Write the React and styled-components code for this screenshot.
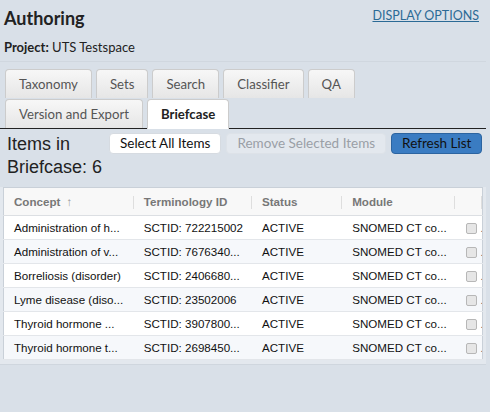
import React from 'react';
import styled, { createGlobalStyle } from 'styled-components';

const GlobalStyle = createGlobalStyle`
  html, body {
    margin: 0;
    padding: 0;
    background: #d9e0e8;
  }
  body {
    font-family: Lato, "Open Sans", sans-serif;
    color: #222;
  }
`;

const tabs = [
  'Taxonomy',
  'Sets',
  'Search',
  'Classifier',
  'QA',
  'Version and Export',
  'Briefcase',
];

const rows = [
  { concept: 'Administration of h...', id: 'SCTID: 722215002', status: 'ACTIVE', module: 'SNOMED CT co...' },
  { concept: 'Administration of v...', id: 'SCTID: 7676340...', status: 'ACTIVE', module: 'SNOMED CT co...' },
  { concept: 'Borreliosis (disorder)', id: 'SCTID: 2406680...', status: 'ACTIVE', module: 'SNOMED CT co...' },
  { concept: 'Lyme disease (diso...', id: 'SCTID: 23502006', status: 'ACTIVE', module: 'SNOMED CT co...' },
  { concept: 'Thyroid hormone ...', id: 'SCTID: 3907800...', status: 'ACTIVE', module: 'SNOMED CT co...' },
  { concept: 'Thyroid hormone t...', id: 'SCTID: 2698450...', status: 'ACTIVE', module: 'SNOMED CT co...' },
];

const App = () => (
  <Page>
    <GlobalStyle />
    <Header>
      <Title>Authoring</Title>
      <OptionsLink href="#">DISPLAY OPTIONS</OptionsLink>
    </Header>
    <Project>
      <b>Project:</b> UTS Testspace
    </Project>
    <Divider />
    <TabBar>
      {tabs.map((t) => (
        <Tab key={t} $active={t === 'Briefcase'}>
          {t}
        </Tab>
      ))}
    </TabBar>
    <Toolbar>
      <Count>
        Items in
        <br />
        Briefcase: 6
      </Count>
      <Buttons>
        <Button>Select All Items</Button>
        <Button $variant="disabled">Remove Selected Items</Button>
        <Button $variant="primary">Refresh List</Button>
      </Buttons>
    </Toolbar>
    <Panel>
      <Table>
        <colgroup>
          <col style={{ width: 130 }} />
          <col style={{ width: 118 }} />
          <col style={{ width: 90 }} />
          <col style={{ width: 113 }} />
          <col style={{ width: 27 }} />
        </colgroup>
        <thead>
          <tr>
            <Th>Concept <Arrow>↑</Arrow></Th>
            <Th>Terminology ID</Th>
            <Th>Status</Th>
            <Th>Module</Th>
            <Th />
          </tr>
        </thead>
        <tbody>
          {rows.map((r, i) => (
            <Tr key={i} $alt={i % 2 === 1}>
              <Td>{r.concept}</Td>
              <Td>{r.id}</Td>
              <Td>{r.status}</Td>
              <Td>{r.module}</Td>
              <CheckCell>
                <Check />
                <Dots>..</Dots>
              </CheckCell>
            </Tr>
          ))}
        </tbody>
      </Table>
    </Panel>
  </Page>
);

const Page = styled.div`
  width: 486px;
  min-height: 100vh;
`;

const Header = styled.div`
  display: flex;
  justify-content: space-between;
  align-items: flex-start;
  padding: 7px 7px 0 4px;
`;

const Title = styled.h1`
  margin: 0;
  font-size: 18px;
  line-height: 22px;
  font-weight: 700;
  color: #222;
`;

const OptionsLink = styled.a`
  font-size: 12.5px;
  line-height: 16px;
  margin-top: 1px;
  color: #2b6a95;
  text-decoration: underline;
`;

const Project = styled.div`
  padding: 10px 4px 0;
  font-size: 13px;
  line-height: 16px;
  color: #222;
`;

const Divider = styled.div`
  margin-top: 6px;
  height: 1px;
  background: #d0d7df;
`;

const TabBar = styled.div`
  display: flex;
  flex-wrap: wrap;
  gap: 1px 4px;
  padding: 7px 0 0 5px;
  border-bottom: 1px solid #222;
`;

const Tab = styled.div`
  padding: 6px 13px;
  font-size: 13.2px;
  line-height: 16px;
  color: ${(p) => (p.$active ? '#222' : '#555')};
  font-weight: ${(p) => (p.$active ? 700 : 400)};
  background: ${(p) =>
    p.$active ? '#fff' : 'linear-gradient(#f7f7f7, #e6e6e6)'};
  border: 1px solid #ccc;
  border-bottom: ${(p) => (p.$active ? '1px solid #fff' : 'none')};
  border-radius: 4px 4px 0 0;
  margin-bottom: ${(p) => (p.$active ? '-1px' : '0')};
`;

const Toolbar = styled.div`
  display: flex;
  align-items: flex-start;
  padding: 4px 0 0 7px;
`;

const Count = styled.h2`
  flex: 0 0 100px;
  min-width: 0;
  margin: 0;
  white-space: nowrap;
  font-family: "Liberation Sans", Arial, sans-serif;
  font-size: 18px;
  line-height: 23px;
  font-weight: 400;
  color: #222;
`;

const Buttons = styled.div`
  display: flex;
  flex-shrink: 0;
  gap: 5px;
  margin-left: 2px;
`;

const Button = styled.button`
  flex-shrink: 0;
  white-space: nowrap;
  font-family: Lato, "Open Sans", sans-serif;
  font-size: 13.5px;
  line-height: 17px;
  padding: 1px 10px;
  border-radius: 4px;
  cursor: pointer;
  border: 1px solid
    ${(p) =>
      p.$variant === 'primary'
        ? '#2c64a0'
        : p.$variant === 'disabled'
        ? '#dde2e8'
        : '#d6dbe1'};
  background: ${(p) =>
    p.$variant === 'primary'
      ? '#3a7cc2'
      : p.$variant === 'disabled'
      ? '#e3e8ee'
      : '#fff'};
  color: ${(p) => (p.$variant === 'disabled' ? '#9a9fa6' : '#111')};
`;

const Panel = styled.div`
  margin-top: 8px;
  padding: 0 3px 4px;
  background: #e3e8ee;
  border-bottom: 1px solid #cfd6de;
`;

const Table = styled.table`
  width: 480px;
  table-layout: fixed;
  border-collapse: collapse;
  background: #fff;
  border: 1px solid #c9d0d8;
  font-family: "Liberation Sans", Arial, sans-serif;
  font-size: 11.6px;
`;

const Th = styled.th`
  position: relative;
  height: 27px;
  padding: 0 10px;
  text-align: left;
  font-weight: 700;
  color: #777;
  background: #f8f8f8;
  border-bottom: 1px solid #dcdfe3;
  &::after {
    content: '';
    position: absolute;
    right: 0;
    top: 8px;
    height: 13px;
    width: 1px;
    background: #dedede;
  }
`;

const Arrow = styled.span`
  color: #999;
  font-weight: 400;
  margin-left: 3px;
`;

const Tr = styled.tr`
  background: ${(p) => (p.$alt ? '#f6f8fb' : '#fff')};
`;

const Td = styled.td`
  height: 23px;
  padding: 0 10px;
  color: #111;
  white-space: nowrap;
  overflow: hidden;
  border-bottom: 1px solid #e3e6ea;
`;

const CheckCell = styled.td`
  height: 23px;
  padding: 0 0 0 11px;
  white-space: nowrap;
  overflow: hidden;
  border-bottom: 1px solid #e3e6ea;
`;

const Check = styled.span`
  display: inline-block;
  vertical-align: middle;
  width: 9px;
  height: 9px;
  border: 1px solid #b7b7b7;
  border-radius: 2px;
  background: #e6e6e6;
`;

const Dots = styled.span`
  margin-left: 3px;
  color: #555;
  font-size: 10px;
  vertical-align: middle;
`;

export default App;
